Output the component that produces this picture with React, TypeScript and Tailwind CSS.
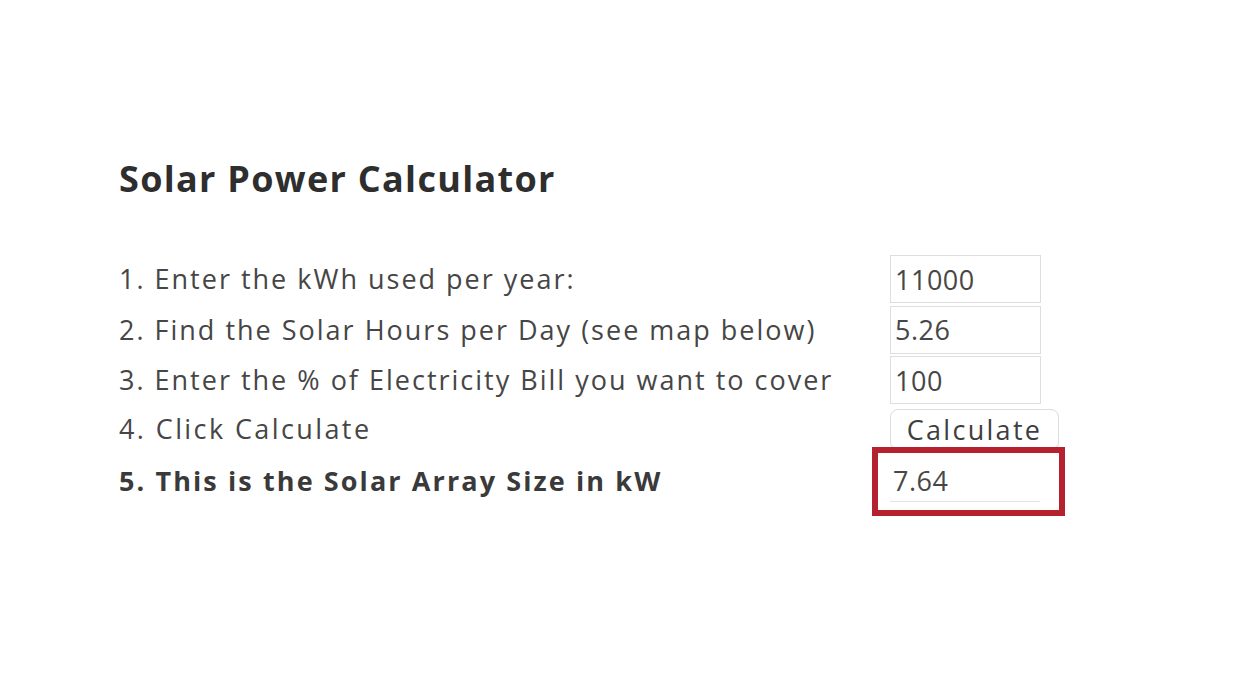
import React from "react";

const rows = [
  { label: "1. Enter the kWh used per year:", value: "11000" },
  { label: "2. Find the Solar Hours per Day (see map below)", value: "5.26" },
  { label: "3. Enter the % of Electricity Bill you want to cover", value: "100" },
];

const App = () => {
  return (
    <main
      className="w-[1240px] h-[674px] bg-white overflow-hidden text-[#464646]"
      style={{ fontFamily: "'Open Sans', sans-serif" }}
    >
      <div className="pl-[119px] pt-[155px]">
        <h1 className="text-[36px] leading-[48px] font-bold tracking-[1.3px] text-[#2e2e2e]">
          Solar Power Calculator
        </h1>
        <div className="mt-[51px] flex flex-col">
          {rows.map((r, i) => (
            <div key={i} className="flex items-center h-[50.5px]">
              <span className="w-[771px] text-[27px] tracking-[2px]">{r.label}</span>
              <input
                readOnly
                value={r.value}
                className="w-[151px] h-[48px] border border-[#dedede] px-[4px] text-[27px] tracking-[0.5px] text-[#474747] outline-none"
              />
            </div>
          ))}
          <div className="flex items-center h-[48px]">
            <span className="w-[771px] text-[27px] tracking-[2.4px]">4. Click Calculate</span>
            <button className="h-[41px] w-[169px] border border-[#dcdcdc] rounded-[8px] bg-white text-[27px] tracking-[2.3px] text-[#3e3e3e] leading-none">
              Calculate
            </button>
          </div>
          <div className="flex items-center h-[69px] -mt-[7px] relative">
            <span className="w-[753px] text-[27px] font-bold tracking-[2.1px] text-[#3a3a3a]">
              5. This is the Solar Array Size in kW
            </span>
            <div className="border-[6px] border-[#b5212e] w-[193px] h-[69px] flex items-center pl-[12px]">
              <input
                readOnly
                value="7.64"
                className="w-[150px] h-[42px] border-b border-[#e2e2e2] px-[3px] text-[27px] tracking-[0.5px] text-[#474747] outline-none bg-white"
              />
            </div>
          </div>
        </div>
      </div>
    </main>
  );
};

export default App;
